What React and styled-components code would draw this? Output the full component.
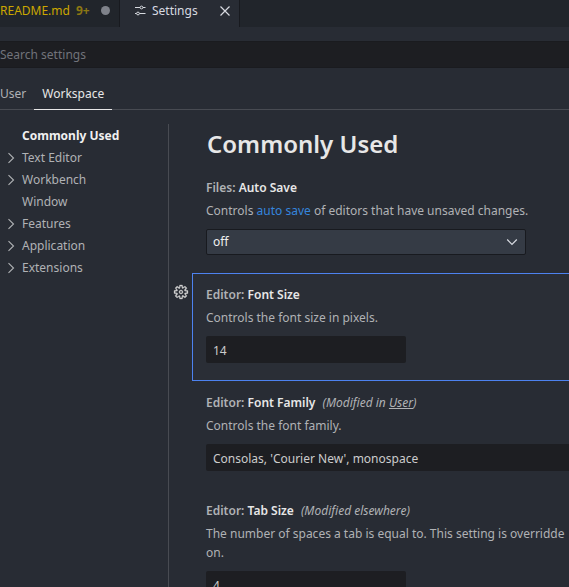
import React from "react";
import styled, { createGlobalStyle } from "styled-components";

const GlobalStyle = createGlobalStyle`
  *, *::before, *::after { box-sizing: border-box; }
  html, body, #root { height: 100%; }
  body {
    margin: 0;
    overflow: hidden;
    background: #282c34;
    color: #b0b2b5;
    font: 12px/18px "Noto Sans", "Open Sans", sans-serif;
  }
  button, input, select { font: inherit; color: inherit; margin: 0; }
`;

const Page = styled.div`
  height: 100%;
  display: flex;
  flex-direction: column;
  overflow: hidden;
`;

const EditorTabs = styled.div`
  display: flex;
  flex: none;
  height: 27px;
  background: #21252b;
`;

const EditorTab = styled.div`
  display: flex;
  align-items: center;
  width: 120px;
  padding: 0 8px 6px ${(p) => (p.$active ? "14px" : "0")};
  border-right: 1px solid #181a1f;
  background: ${(p) => (p.$active ? "#282c34" : "#21252b")};
`;

const TabButton = styled.button`
  display: flex;
  align-items: center;
  flex: 1;
  gap: 6px;
  padding: 0;
  border: 0;
  background: none;
  white-space: nowrap;
  color: ${(p) => (p.$warning ? "#cca700" : "#d7dae0")};
`;

const Badge = styled.span`
  color: #8d7813;
  font-weight: 700;
`;

const Dirty = styled.span`
  width: 9px;
  height: 9px;
  margin-right: 1px;
  border-radius: 50%;
  background: #7f828a;
`;

const IconButton = styled.button`
  display: flex;
  padding: 0;
  border: 0;
  background: none;
  color: #d7dae0;
`;

const SearchInput = styled.input`
  display: block;
  flex: none;
  width: 100%;
  height: 27px;
  margin-top: 14px;
  padding: 0;
  border: 1px solid #1a1b1f;
  border-width: 1px 0;
  background: #1d1e22;
  color: #d7dae0;
  &::placeholder { color: #71737a; opacity: 1; }
`;

const ScopeTabs = styled.div`
  display: flex;
  flex: none;
  gap: 8px;
  height: 32px;
  margin: 10px 0 14px;
  border-bottom: 1px solid #484b52;
`;

const ScopeTab = styled.button`
  height: 32px;
  padding: 0 ${(p) => (p.$active ? "8px" : "0")};
  border: 0;
  border-bottom: 1px solid ${(p) => (p.$active ? "#e7e7e7" : "transparent")};
  background: none;
  color: ${(p) => (p.$active ? "#e7e7e7" : "#b0b2b5")};
`;

const Body = styled.div`
  display: flex;
  flex: 1;
  min-height: 0;
`;

const Toc = styled.nav`
  flex: none;
  width: 169px;
  border-right: 1px solid #484b52;
`;

const TocRow = styled.button`
  display: grid;
  grid-template-columns: 12px 1fr;
  align-items: center;
  gap: 5px;
  width: 100%;
  height: 22px;
  padding: 1px 0 0 5px;
  border: 0;
  background: none;
  text-align: left;
  color: ${(p) => (p.$selected ? "#f0f0f0" : "#b0b2b5")};
  font-weight: ${(p) => (p.$selected ? 700 : 400)};
`;

const TocLabel = styled.span`
  grid-column: 2;
  grid-row: 1;
`;

const Settings = styled.main`
  flex: 1;
  min-width: 0;
  overflow: hidden;
`;

const Heading = styled.h1`
  margin: 0;
  padding: 3px 0 5px 38px;
  color: #e7e7e7;
  font-size: 24px;
  line-height: 34px;
  font-weight: 600;
`;

const SettingRow = styled.div`
  display: grid;
  grid-template-columns: 23px minmax(0, 1fr);
`;

const GearButton = styled(IconButton)`
  align-self: start;
  margin: 11px 0 0 4px;
  color: #d0d0d0;
`;

const SettingBody = styled.section`
  grid-column: 2;
  display: flow-root;
  padding: 12px 0 17px 13px;
  border: 1px solid ${(p) => (p.$focused ? "#4d82ef" : "transparent")};
  border-right: 0;
  background: ${(p) => (p.$focused ? "#2a2e36" : "transparent")};
  white-space: nowrap;
  overflow: hidden;
`;

const SettingTitle = styled.label`
  display: block;
  font-weight: 600;
`;

const SettingName = styled.span`
  color: #e7e7e7;
`;

const Scope = styled.em`
  margin-left: 7px;
  font-weight: 400;
`;

const ScopeLink = styled.a`
  color: inherit;
  text-decoration: underline;
`;

const Description = styled.p`
  margin: 4px 0 9px;
  line-height: 19px;
`;

const DocLink = styled.a`
  color: #3585dd;
  text-decoration: none;
`;

const TextInput = styled.input`
  display: block;
  width: ${(p) => (p.$wide ? "100%" : "200px")};
  height: 27px;
  padding: 2px 7px 0;
  border: 0;
  border-radius: ${(p) => (p.$wide ? "2px 0 0 2px" : "2px")};
  background: #1d1e22;
  color: #cccccc;
`;

const SelectWrap = styled.div`
  display: grid;
  align-items: center;
  width: 320px;
  max-width: 100%;
  > * { grid-area: 1 / 1; }
  > svg { justify-self: end; margin-right: 8px; pointer-events: none; }
`;

const Select = styled.select`
  appearance: none;
  width: 100%;
  height: 26px;
  padding: 0 6px 1px;
  border: 1px solid #181a1f;
  border-radius: 2px;
  background: #353b45;
  color: #f0f0f0;
`;

const SlidersIcon = () => (
  <svg width="12" height="12" viewBox="0 0 12 12" fill="none" stroke="currentColor" aria-hidden="true">
    <path d="M1 2.500h5M9 2.500h2.500M1 8.500h1.500M5.500 8.500h6" />
    <circle cx="7.500" cy="2.500" r="1.400" />
    <circle cx="4" cy="8.500" r="1.400" />
  </svg>
);

const CloseIcon = () => (
  <svg width="12" height="12" viewBox="0 0 12 12" fill="none" stroke="currentColor" strokeWidth="1.200" aria-hidden="true">
    <path d="M1.500 1.500l9 9M10.500 1.500l-9 9" />
  </svg>
);

const ChevronRight = () => (
  <svg width="12" height="12" viewBox="0 0 12 12" fill="none" stroke="currentColor" strokeWidth="1.100" aria-hidden="true">
    <path d="M3.500 1.200l5 4.800-5 4.800" />
  </svg>
);

const ChevronDown = () => (
  <svg width="12" height="12" viewBox="0 0 12 12" fill="none" stroke="#d7dae0" strokeWidth="1.200" aria-hidden="true">
    <path d="M1.200 3.500L6 8.300l4.800-4.800" />
  </svg>
);

const GearIcon = () => (
  <svg
    width="16"
    height="16"
    viewBox="0 0 16 16"
    fill="currentColor"
    fillRule="evenodd"
    stroke="currentColor"
    strokeWidth="0.300"
    aria-hidden="true"
  >
    <path d="M9.1 4.400L8.600 2H7.400l-.5 2.400-.7.3-2-1.300-.9.8 1.300 2-.2.7-2.400.5v1.200l2.400.5.3.8-1.300 2 .8.8 2-1.300.8.3.4 2.300h1.200l.5-2.400.8-.3 2 1.300.8-.8-1.300-2 .3-.8 2.300-.4V7.400l-2.400-.5-.3-.8 1.300-2-.8-.8-2 1.300-.7-.2zM9.400 1l.5 2.400L12 2.100l2 2-1.400 2.100 2.400.4v2.800l-2.400.5L14 12l-2 2-2.100-1.400-.5 2.400H6.600l-.5-2.400L4 13.900l-2-2 1.400-2.100L1 9.400V6.600l2.400-.5L2.100 4l2-2 2.100 1.400.4-2.400h2.800zm.6 7c0 1.100-.9 2-2 2s-2-.9-2-2 .9-2 2-2 2 .9 2 2zM8 9c.6 0 1-.4 1-1s-.4-1-1-1-1 .4-1 1 .4 1 1 1z" />
  </svg>
);

const TOC = [
  { label: "Commonly Used", selected: true },
  { label: "Text Editor", expandable: true },
  { label: "Workbench", expandable: true },
  { label: "Window" },
  { label: "Features", expandable: true },
  { label: "Application", expandable: true },
  { label: "Extensions", expandable: true },
];

function Setting({ id, category, name, scope, description, focused, children }) {
  return (
    <SettingRow>
      {focused && (
        <GearButton aria-label="More actions">
          <GearIcon />
        </GearButton>
      )}
      <SettingBody $focused={focused}>
        <SettingTitle htmlFor={id}>
          {category}: <SettingName>{name}</SettingName>
          {scope && <Scope>{scope}</Scope>}
        </SettingTitle>
        <Description>{description}</Description>
        {children}
      </SettingBody>
    </SettingRow>
  );
}

export default function App() {
  return (
    <Page>
      <GlobalStyle />
      <EditorTabs>
        <EditorTab>
          <TabButton $warning>
            README.md <Badge>9+</Badge>
          </TabButton>
          <Dirty />
        </EditorTab>
        <EditorTab $active>
          <TabButton>
            <SlidersIcon />
            Settings
          </TabButton>
          <IconButton aria-label="Close">
            <CloseIcon />
          </IconButton>
        </EditorTab>
      </EditorTabs>
      <SearchInput type="text" placeholder="Search settings" aria-label="Search settings" />
      <ScopeTabs>
        <ScopeTab>User</ScopeTab>
        <ScopeTab $active>Workspace</ScopeTab>
      </ScopeTabs>
      <Body>
        <Toc>
          {TOC.map((row) => (
            <TocRow key={row.label} $selected={row.selected}>
              {row.expandable && <ChevronRight />}
              <TocLabel>{row.label}</TocLabel>
            </TocRow>
          ))}
        </Toc>
        <Settings>
          <Heading>Commonly Used</Heading>
          <Setting
            id="auto-save"
            category="Files"
            name="Auto Save"
            description={
              <>
                Controls <DocLink href="#auto-save">auto save</DocLink> of editors that have unsaved changes.
              </>
            }
          >
            <SelectWrap>
              <Select id="auto-save" defaultValue="off">
                <option>off</option>
              </Select>
              <ChevronDown />
            </SelectWrap>
          </Setting>
          <Setting
            id="font-size"
            category="Editor"
            name="Font Size"
            description="Controls the font size in pixels."
            focused
          >
            <TextInput id="font-size" type="text" defaultValue="14" />
          </Setting>
          <Setting
            id="font-family"
            category="Editor"
            name="Font Family"
            scope={
              <>
                (Modified in <ScopeLink href="#user">User</ScopeLink>)
              </>
            }
            description="Controls the font family."
          >
            <TextInput id="font-family" type="text" $wide defaultValue="Consolas, 'Courier New', monospace" />
          </Setting>
          <Setting
            id="tab-size"
            category="Editor"
            name="Tab Size"
            scope="(Modified elsewhere)"
            description={
              <>
                The number of spaces a tab is equal to. This setting is overridde
                <br />
                on.
              </>
            }
          >
            <TextInput id="tab-size" type="text" defaultValue="4" />
          </Setting>
        </Settings>
      </Body>
    </Page>
  );
}
